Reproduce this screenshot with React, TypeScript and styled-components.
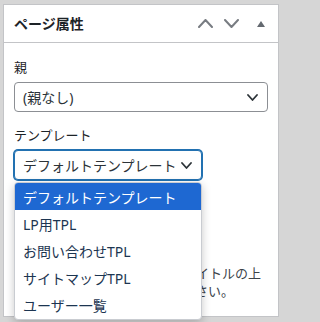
import styled, { createGlobalStyle } from "styled-components";

const GlobalStyle = createGlobalStyle`
  html, body {
    margin: 0;
    background: #d6d6d6;
  }
  body {
    font-family: "Noto Sans", "Noto Sans CJK JP", sans-serif;
    color: #1d2327;
  }
`;

const Page = styled.div`
  box-sizing: border-box;
  width: 282px;
  height: 322px;
  padding: 4px 3px 0 3px;
`;

const Panel = styled.div`
  position: relative;
  box-sizing: border-box;
  height: 313px;
  background: #fff;
  border: 1px solid #c3c4c7;
`;

const Header = styled.div`
  display: flex;
  align-items: center;
  height: 37px;
  padding-left: 10px;
  border-bottom: 1px solid #c3c4c7;
`;

const Title = styled.h2`
  flex: 1;
  margin: 0;
  font-size: 14px;
  font-weight: 700;
  line-height: 1;
  color: #1d2327;
`;

const HandleButton = styled.span<{ $w: number }>`
  display: flex;
  align-items: center;
  justify-content: center;
  width: ${(p) => p.$w}px;
  height: 37px;
  color: #787c82;
`;

const Body = styled.div`
  padding: 15px 10px 0;
`;

const Field = styled.div`
  & + & {
    margin-top: 14px;
  }
`;

const Label = styled.div`
  margin: 0 0 6px;
  font-size: 13px;
  line-height: 18px;
  color: #1d2327;
`;

const SelectWrap = styled.div<{ $width?: number }>`
  position: relative;
  width: ${(p) => (p.$width ? `${p.$width}px` : "100%")};
`;

const SelectBox = styled.div<{ $focused?: boolean }>`
  box-sizing: border-box;
  display: flex;
  align-items: center;
  justify-content: space-between;
  height: 30px;
  padding: 0 9px 0 8px;
  border: 1px solid ${(p) => (p.$focused ? "#2271b1" : "#8c8f94")};
  border-radius: 4px;
  box-shadow: ${(p) => (p.$focused ? "0 0 0 1px #2271b1" : "none")};
  background: #fff;
  font-size: 14px;
  color: #2c3338;
  white-space: nowrap;
`;

const Help = styled.p`
  margin: 84px 0 0;
  font-size: 13px;
  line-height: 18px;
  color: #3c434a;
`;

const Dropdown = styled.ul`
  position: absolute;
  z-index: 2;
  left: 0;
  right: 0;
  top: calc(100% + 2px);
  margin: 0;
  padding: 0;
  list-style: none;
  background: #fff;
  border: 1px solid #c9ccd1;
  border-radius: 4px;
  overflow: hidden;
  box-shadow: 0 3px 10px rgba(0, 0, 0, 0.22);
`;

const Option = styled.li<{ $active?: boolean }>`
  display: flex;
  align-items: center;
  height: 27.2px;
  padding-left: 8px;
  font-size: 14px;
  white-space: nowrap;
  color: ${(p) => (p.$active ? "#fff" : "#1c3551")};
  background: ${(p) => (p.$active ? "#1e68d2" : "transparent")};
`;

const Chevron = ({ up = false, w = 9, h = 5, sw = 1.8 }: { up?: boolean; w?: number; h?: number; sw?: number }) => (
  <svg width={w + 2} height={h + 2} viewBox={`0 0 ${w + 2} ${h + 2}`} fill="none">
    <polyline
      points={up ? `1,${h + 1} ${w / 2 + 1},1 ${w + 1},${h + 1}` : `1,1 ${w / 2 + 1},${h + 1} ${w + 1},1`}
      stroke="currentColor"
      strokeWidth={sw}
      strokeLinecap="round"
      strokeLinejoin="round"
    />
  </svg>
);

const Caret = styled.span`
  display: flex;
  color: #2c3338;
`;

const templates = [
  "デフォルトテンプレート",
  "LP用TPL",
  "お問い合わせTPL",
  "サイトマップTPL",
  "ユーザー一覧",
];

const App = () => {
  return (
    <>
      <GlobalStyle />
      <Page>
        <Panel>
          <Header>
            <Title>ページ属性</Title>
            <HandleButton $w={26}>
              <Chevron up w={13} h={7} sw={2} />
            </HandleButton>
            <HandleButton $w={26}>
              <Chevron w={13} h={7} sw={2} />
            </HandleButton>
            <HandleButton $w={34}>
              <svg width="8" height="6" viewBox="0 0 8 6">
                <polygon points="4,0 8,6 0,6" fill="#646970" />
              </svg>
            </HandleButton>
          </Header>
          <Body>
            <Field>
              <Label>親</Label>
              <SelectWrap>
                <SelectBox>
                  (親なし)
                  <Caret>
                    <Chevron />
                  </Caret>
                </SelectBox>
              </SelectWrap>
            </Field>
            <Field>
              <Label>テンプレート</Label>
              <SelectWrap $width={188}>
                <SelectBox $focused>
                  デフォルトテンプレート
                  <Caret>
                    <Chevron />
                  </Caret>
                </SelectBox>
                <Dropdown>
                  {templates.map((t, i) => (
                    <Option key={t} $active={i === 0}>
                      {t}
                    </Option>
                  ))}
                </Dropdown>
              </SelectWrap>
            </Field>
            <Help>ヘルプが必要ですか？画面のタイトルの上の「ヘルプ」タブを使ってください。</Help>
          </Body>
        </Panel>
      </Page>
    </>
  );
};

export default App;
